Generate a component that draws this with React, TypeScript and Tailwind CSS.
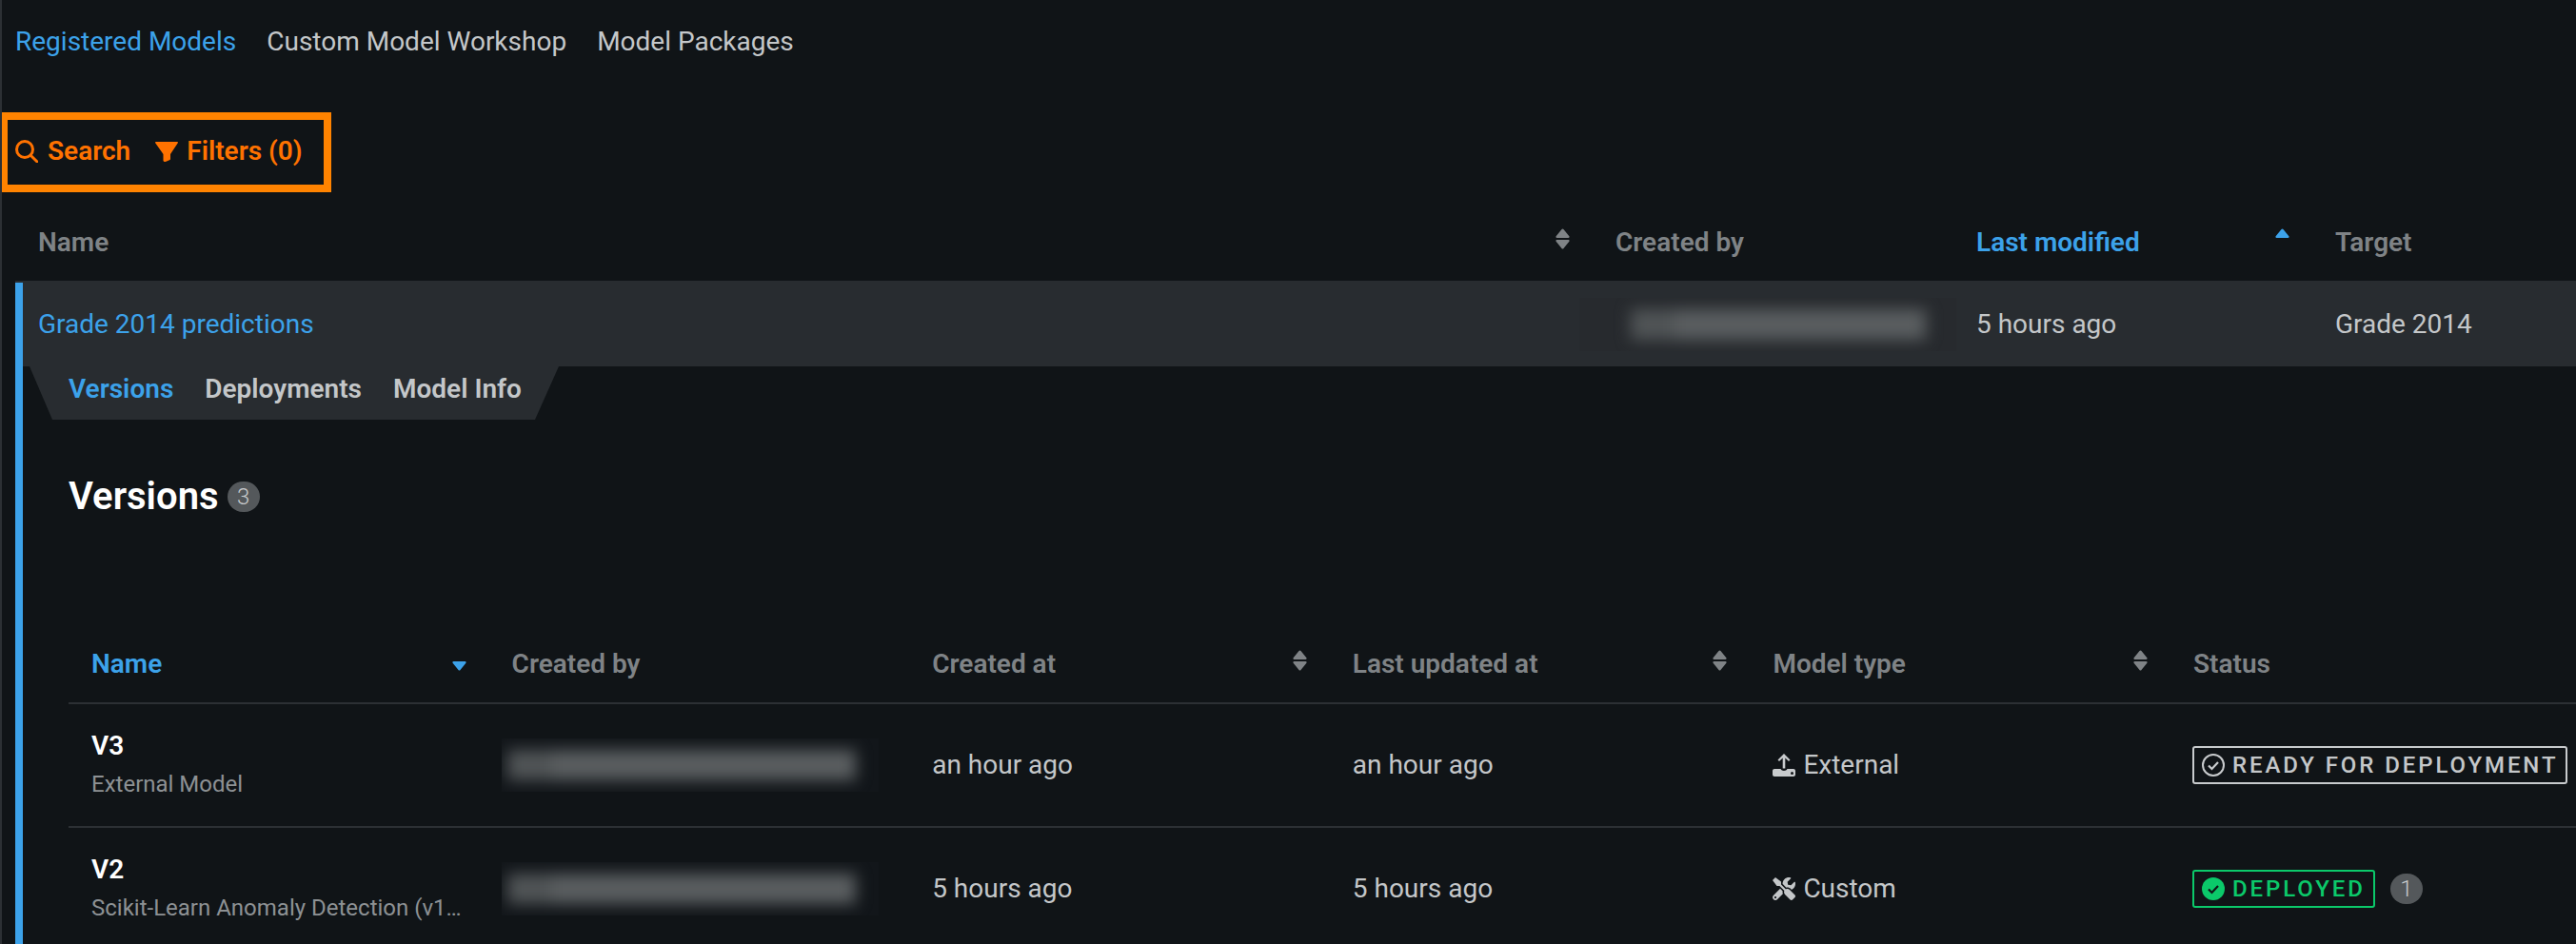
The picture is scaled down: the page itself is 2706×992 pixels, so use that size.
import React from "react";
import { FaTools } from "react-icons/fa";

const NAV_LINKS = ["Registered Models", "Custom Model Workshop", "Model Packages"];
const DETAIL_TABS = ["Versions", "Deployments", "Model Info"];

const VERSIONS = [
  {
    name: "V3",
    source: "External Model",
    createdAt: "an hour ago",
    updatedAt: "an hour ago",
    type: "External",
  },
  {
    name: "V2",
    source: "Scikit-Learn Anomaly Detection (v1…",
    createdAt: "5 hours ago",
    updatedAt: "5 hours ago",
    type: "Custom",
  },
];

function SearchIcon() {
  return (
    <svg width="24" height="24" viewBox="0 0 24 24" fill="none" stroke="#ff7200" strokeWidth="3" strokeLinecap="round">
      <circle cx="10" cy="10" r="8.500" />
      <path d="M16.200 16.200 22.800 22.800" />
    </svg>
  );
}

function FunnelIcon() {
  return (
    <svg width="24" height="21" viewBox="0 0 24 21" fill="#ff7200">
      <path d="M.8 0h22.400c.7 0 1 .8.6 1.300L16 13v5c0 .4-.2.700-.5.900l-4 1.900c-1 .4-3-.1-3-1.100V13L.2 1.300C-.2.800.1 0 .8 0z" />
    </svg>
  );
}

function SortIcon({ dir, color = "#7f8386" }: { dir?: "up" | "down"; color?: string }) {
  return (
    <svg width="15" height="22" viewBox="0 0 15 22" fill={color} className="mb-[8px] shrink-0">
      {dir !== "down" && <path d="M6.500 1 .6 8.300C.1 9 .5 10 1.400 10h12.200c.9 0 1.300-1 .8-1.700L8.500 1c-.5-.7-1.500-.7-2 0z" />}
      {dir !== "up" && <path d="M6.500 21 .6 13.700C.1 13 .5 12 1.400 12h12.200c.9 0 1.300 1 .8 1.700L8.500 21c-.5.7-1.500.7-2 0z" />}
    </svg>
  );
}

function ExternalIcon() {
  return (
    <svg width="24" height="24" viewBox="0 0 24 24" fill="#c8cbcd" className="shrink-0">
      <path d="M12 0 18.500 6.500 17 8l-3.700-3.600V15.500h-2.600V4.400L7 8 5.500 6.500z" />
      <path fillRule="evenodd" d="M2 16h6.500c.6 1.300 1.900 2 3.500 2s2.900-.7 3.500-2H22c1.100 0 2 .9 2 2v4c0 1.100-.9 2-2 2H2c-1.100 0-2-.9-2-2v-4c0-1.100.9-2 2-2zm18.500 3a1.500 1.500 0 1 0 0 3 1.500 1.500 0 0 0 0-3z" />
    </svg>
  );
}

function CheckCircle({ solid, color }: { solid?: boolean; color: string }) {
  return (
    <svg width="24" height="24" viewBox="0 0 24 24" className="shrink-0">
      <circle cx="12" cy="12" r={solid ? 12 : 11} fill={solid ? color : "none"} stroke={solid ? "none" : color} strokeWidth="2" />
      <path d="M7 12.500l3.500 3.500L17 9" fill="none" stroke={solid ? "#101417" : color} strokeWidth="2.200" />
    </svg>
  );
}

function Count({ value }: { value: number }) {
  return (
    <span className="flex h-[32px] w-[34px] items-center justify-center rounded-full bg-[#54585b] text-[24px] font-light text-[#c8cbcd]">
      {value}
    </span>
  );
}

// the e-mail address is smeared out in the picture
function Blurred({ className }: { className: string }) {
  return (
    <div className={`h-[56px] w-[396px] overflow-hidden py-[12px] ${className}`}>
      <div className="flex h-full blur-[8px]">
        <div className="w-[46px] bg-[#505456]" />
        <div className="flex-1 bg-[#5a5e60]" />
      </div>
    </div>
  );
}

export default function App() {
  return (
    <div className="h-[992px] w-full overflow-hidden border-l-2 border-[#2c3034] bg-[#101417] [font-family:Roboto,sans-serif] text-[28px] text-[#c4c7c9]">
      {/* top nav */}
      <div className="flex h-[88px] items-center gap-[32px] pl-[14px]">
        {NAV_LINKS.map((link, i) => (
          <span key={link} className={i === 0 ? "text-[#3ca2ea]" : ""}>
            {link}
          </span>
        ))}
      </div>

      <div className="mt-[30px] flex h-[84px] w-[348px] -ml-[2px] items-center gap-[10px] border-[8px] border-[#ff8300] pb-[2px] pl-[8px] font-semibold text-[#ff7200]">
        <SearchIcon />
        <span className="mr-[16px]">Search</span>
        <FunnelIcon />
        <span className="-ml-[1px]">Filters (0)</span>
      </div>

      {/* registered models table */}
      <div className="ml-[14px] grid h-[93px] grid-cols-[1657px_379px_377px_1fr] items-center pt-[12px] font-semibold text-[#7f8386]">
        <div className="flex items-center justify-between px-[24px]">
          <span>Name</span>
          <SortIcon />
        </div>
        <div className="px-[24px]">Created by</div>
        <div className="flex items-center justify-between px-[24px]">
          <span className="text-[#3ca2ea]">Last modified</span>
          <SortIcon dir="up" color="#3ca2ea" />
        </div>
        <div className="px-[24px]">Target</div>
      </div>

      <div className="ml-[14px] bg-[#282c30] pt-[2px]">
        <div className="grid h-[88px] grid-cols-[1649px_379px_377px_1fr] items-center border-l-8 border-[#3ca2ea]">
          <div className="px-[16px] text-[#3ca2ea]">Grade 2014 predictions</div>
          <div className="px-[24px]">
            <Blurred className="-ml-[38px] bg-[#272a2e] pl-[54px] pr-[32px]" />
          </div>
          <div className="px-[24px]">5 hours ago</div>
          <div className="px-[24px]">Grade 2014</div>
        </div>
      </div>

      {/* expanded row */}
      <div className="ml-[14px] border-l-8 border-[#3ca2ea]">
        <div className="ml-[7px] flex h-[56px] w-[556px] items-center gap-[33px] bg-[#282c30] pb-[9px] pl-[41px] font-semibold [clip-path:polygon(0_0,100%_0,531px_100%,24px_100%)]">
          {DETAIL_TABS.map((tab, i) => (
            <span key={tab} className={i === 0 ? "text-[#3ca2ea]" : ""}>
              {tab}
            </span>
          ))}
        </div>

        <div className="ml-[48px] mt-[57px] flex h-[48px] items-center gap-[9px] text-[40px] font-semibold text-white">
          <span>Versions</span>
          <Count value={3} />
        </div>

        <div className="ml-[48px] mt-[109px]">
          <div className="grid h-[85px] grid-cols-[repeat(5,441.6px)_1fr] items-center border-b-2 border-[#2c3034] pt-[2px] font-semibold text-[#7f8386]">
            <div className="flex items-center justify-between px-[24px]">
              <span className="text-[#3ca2ea]">Name</span>
              <SortIcon dir="down" color="#3ca2ea" />
            </div>
            <div className="px-[24px]">Created by</div>
            <div className="flex items-center justify-between px-[24px]">
              <span>Created at</span>
              <SortIcon />
            </div>
            <div className="flex items-center justify-between px-[24px]">
              <span>Last updated at</span>
              <SortIcon />
            </div>
            <div className="flex items-center justify-between px-[24px]">
              <span>Model type</span>
              <SortIcon />
            </div>
            <div className="px-[24px]">Status</div>
          </div>

          {VERSIONS.map((version) => (
            <div
              key={version.name}
              className="grid h-[130px] grid-cols-[repeat(5,441.6px)_1fr] items-center border-b-2 border-[#2c3034]"
            >
              <div className="min-w-0 px-[24px]">
                <div className="font-semibold leading-[40px] text-white">{version.name}</div>
                <div className="whitespace-nowrap text-[24px] leading-[40px] text-[#8d9194]">{version.source}</div>
              </div>
              <div className="px-[24px]">
                <Blurred className="-ml-[11px] bg-[#12161a] pl-[6px] pr-[24px]" />
              </div>
              <div className="px-[24px]">{version.createdAt}</div>
              <div className="px-[24px]">{version.updatedAt}</div>
              <div className="flex items-center gap-[8px] px-[24px]">
                {version.type === "External" ? <ExternalIcon /> : <FaTools size={24} className="shrink-0" />}
                <span>{version.type}</span>
              </div>
              <div className="flex items-center gap-[16px] px-[24px] text-[24px] font-medium tracking-[2.9px]">
                {version.type === "External" ? (
                  <span className="-ml-[1px] flex h-[40px] shrink-0 items-center gap-[8px] rounded-[3px] border-2 border-[#c8cbcd] px-[8px] whitespace-nowrap">
                    <CheckCircle color="#c8cbcd" />
                    READY FOR DEPLOYMENT
                  </span>
                ) : (
                  <>
                    <span className="-ml-[1px] flex h-[40px] shrink-0 items-center gap-[8px] rounded-[3px] border-2 border-[#0bc96a] px-[8px] text-[#0bc96a]">
                      <CheckCircle solid color="#0bc96a" />
                      DEPLOYED
                    </span>
                    <span className="tracking-normal">
                      <Count value={1} />
                    </span>
                  </>
                )}
              </div>
            </div>
          ))}
        </div>
      </div>
    </div>
  );
}
